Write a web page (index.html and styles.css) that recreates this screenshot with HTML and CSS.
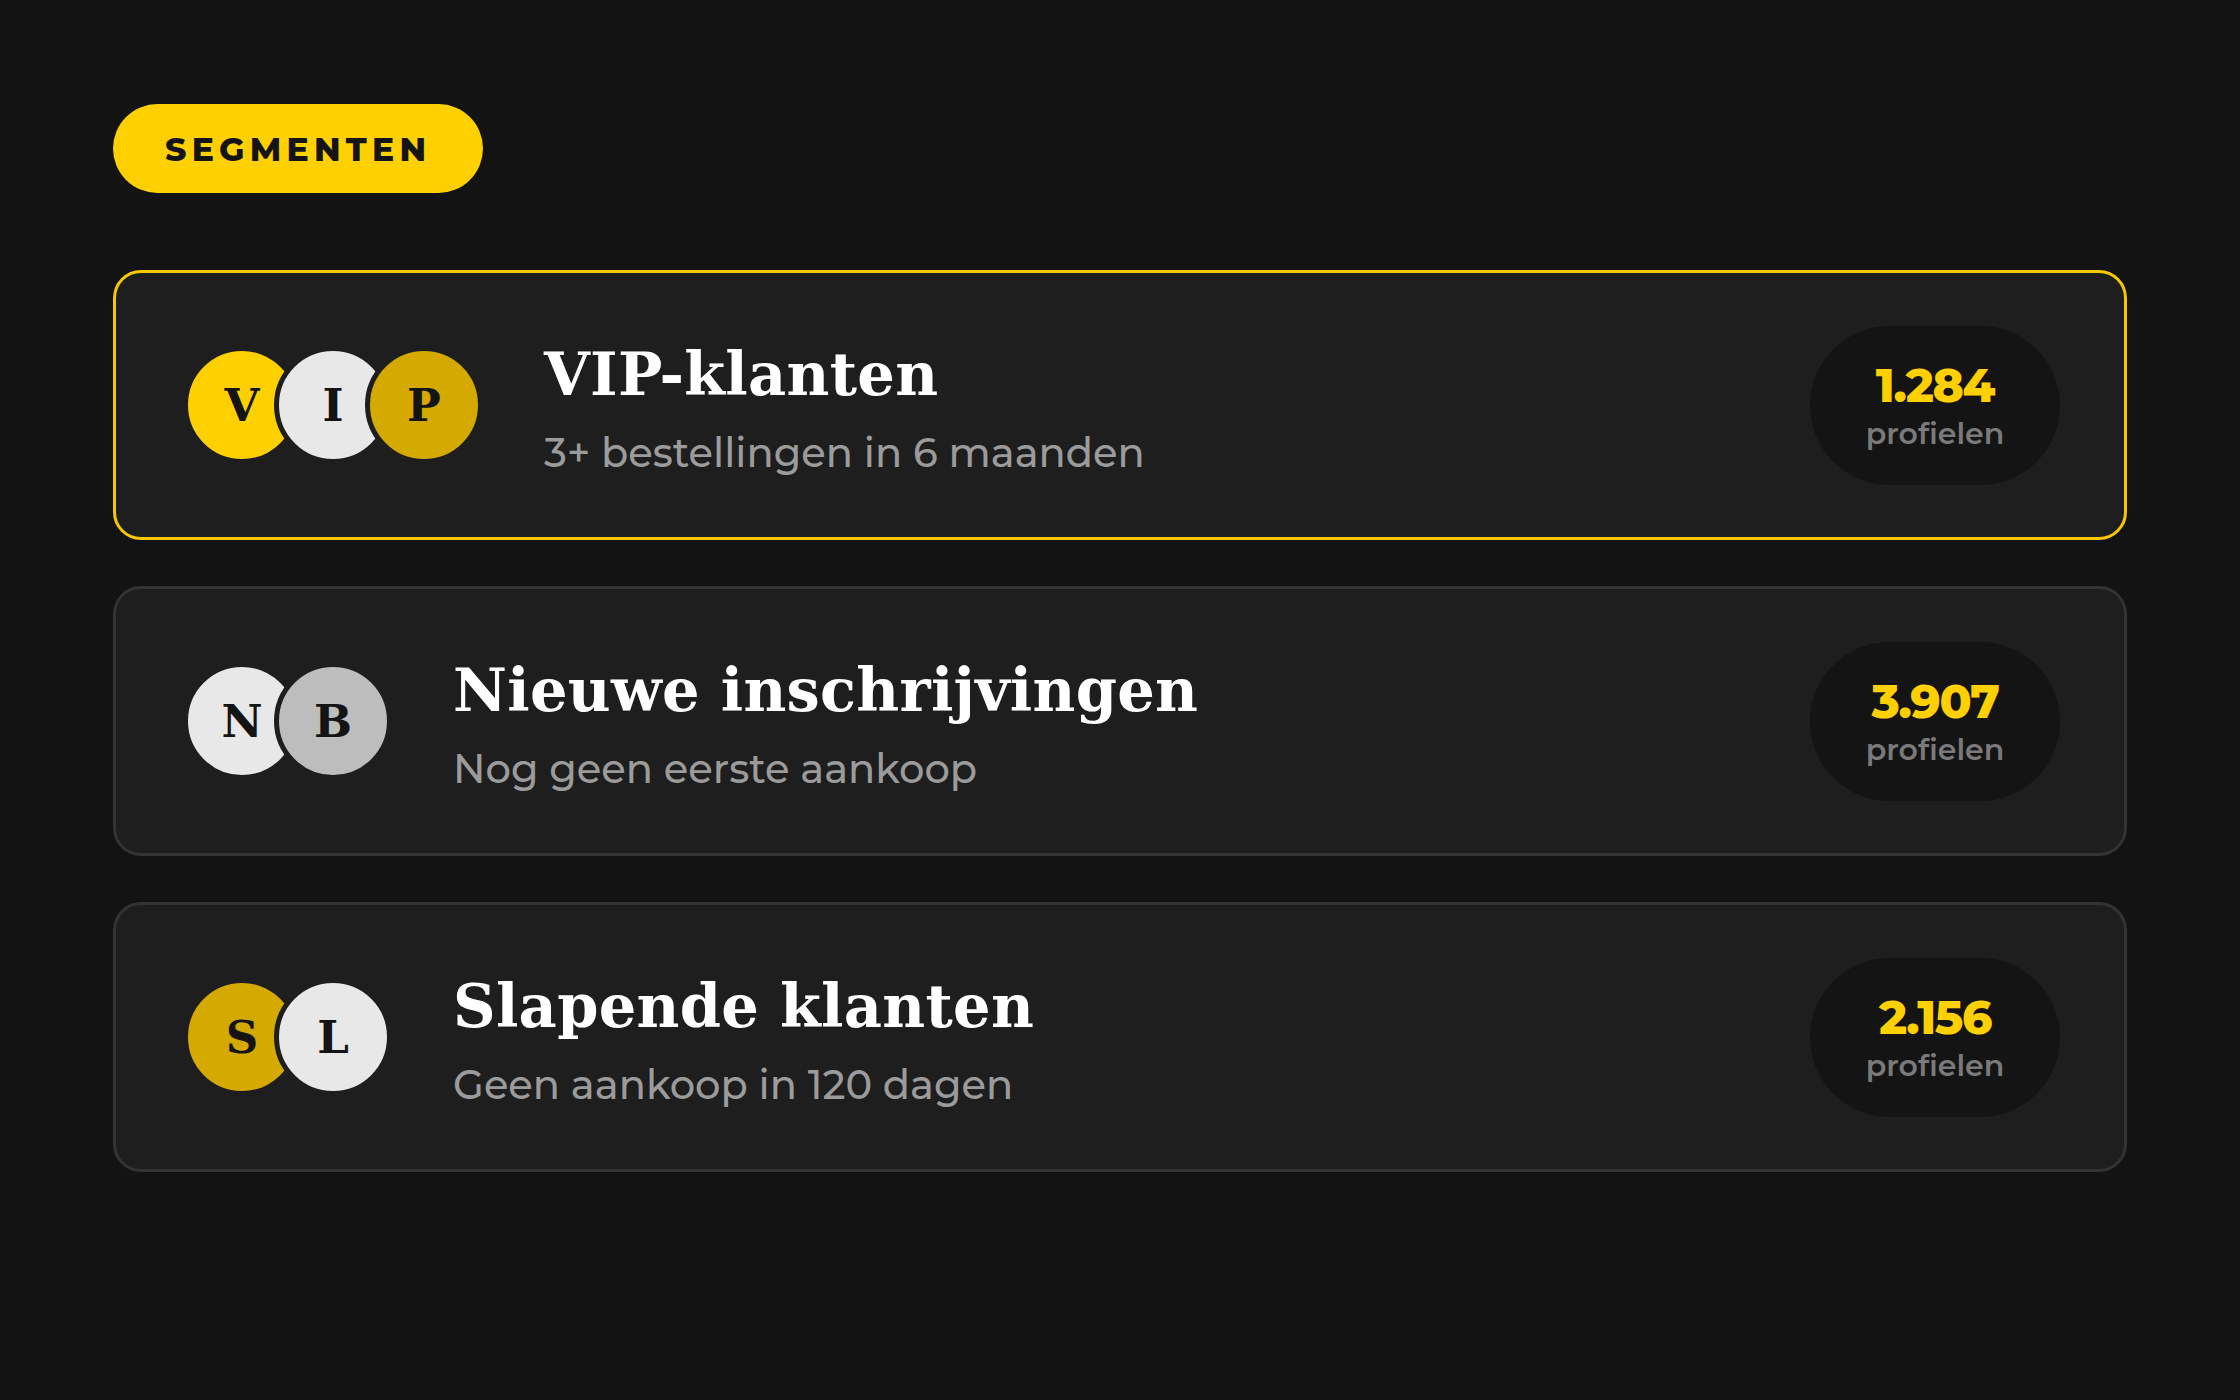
FILE: index.html
```html
<!DOCTYPE html>
<html lang="nl">
<head>
  <meta charset="UTF-8">
  <title>Segmenten</title>
  <meta name="viewport" content="width=device-width, initial-scale=1.0">
  <link rel="stylesheet" href="styles.css">
</head>
<body>

  <div class="page">
    <div class="badge">Segmenten</div>

    <div class="segment-list">
      <div class="segment active">
        <div class="avatars">
          <span class="avatar yellow">V</span>
          <span class="avatar light">I</span>
          <span class="avatar gold">P</span>
        </div>
        <div class="segment-text">
          <h2>VIP-klanten</h2>
          <p>3+ bestellingen in 6 maanden</p>
        </div>
        <div class="count">
          <strong>1.284</strong>
          <span>profielen</span>
        </div>
      </div>

      <div class="segment">
        <div class="avatars">
          <span class="avatar light">N</span>
          <span class="avatar grey">B</span>
        </div>
        <div class="segment-text">
          <h2>Nieuwe inschrijvingen</h2>
          <p>Nog geen eerste aankoop</p>
        </div>
        <div class="count">
          <strong>3.907</strong>
          <span>profielen</span>
        </div>
      </div>

      <div class="segment">
        <div class="avatars">
          <span class="avatar gold">S</span>
          <span class="avatar light">L</span>
        </div>
        <div class="segment-text">
          <h2>Slapende klanten</h2>
          <p>Geen aankoop in 120 dagen</p>
        </div>
        <div class="count">
          <strong>2.156</strong>
          <span>profielen</span>
        </div>
      </div>
    </div>
  </div>

</body>
</html>
```

FILE: styles.css
```css
body {
  margin: 0;
  background-color: #131313;
  font-family: 'Montserrat', 'Inter', sans-serif;
  color: #fff;
}

.page {
  padding: 104px 113px;
}

.badge {
  display: inline-flex;
  align-items: center;
  height: 89px;
  padding: 0 52px;
  border-radius: 45px;
  background-color: #ffd000;
  color: #141414;
  font-size: 33px;
  font-weight: 800;
  letter-spacing: 0.16em;
  text-transform: uppercase;
}

.segment-list {
  display: flex;
  flex-direction: column;
  gap: 46px;
  margin-top: 77px;
}

.segment {
  display: flex;
  align-items: center;
  box-sizing: border-box;
  height: 270px;
  padding: 0 64px 0 67px;
  background-color: #1e1e1e;
  border: 3px solid #333333;
  border-radius: 28px;
}

.segment.active {
  border-color: #f5c800;
}

.avatars {
  display: flex;
}

.avatar {
  display: flex;
  align-items: center;
  justify-content: center;
  width: 108px;
  height: 108px;
  border: 5px solid #1e1e1e;
  border-radius: 50%;
  color: #141414;
  font-family: 'DejaVu Serif', serif;
  font-size: 45px;
  font-weight: bold;
}

.avatar + .avatar {
  margin-left: -27px;
}

.yellow { background-color: #ffd000; }
.gold { background-color: #d4aa00; }
.light { background-color: #e8e8e8; }
.grey { background-color: #bdbdbd; }

.segment-text {
  margin: 8px 0 0 61px;
}

.segment-text h2 {
  margin: 0;
  font-family: 'DejaVu Serif', serif;
  font-size: 59px;
  font-weight: bold;
  line-height: 1.1;
  letter-spacing: 0.005em;
}

.segment-text p {
  margin: 23px 0 0;
  color: #9b9b9b;
  font-size: 40px;
  font-weight: 500;
  line-height: 1.1;
}

.count {
  display: flex;
  flex-direction: column;
  align-items: center;
  justify-content: center;
  width: 250px;
  height: 159px;
  margin-left: auto;
  border-radius: 80px;
  background-color: #141414;
}

.count strong {
  margin-top: 2px;
  color: #ffd000;
  font-size: 47px;
  font-weight: 800;
  letter-spacing: -0.03em;
  line-height: 1.1;
}

.count span {
  margin-top: 3px;
  color: #7a7a7a;
  font-size: 30px;
  font-weight: 600;
}
```
